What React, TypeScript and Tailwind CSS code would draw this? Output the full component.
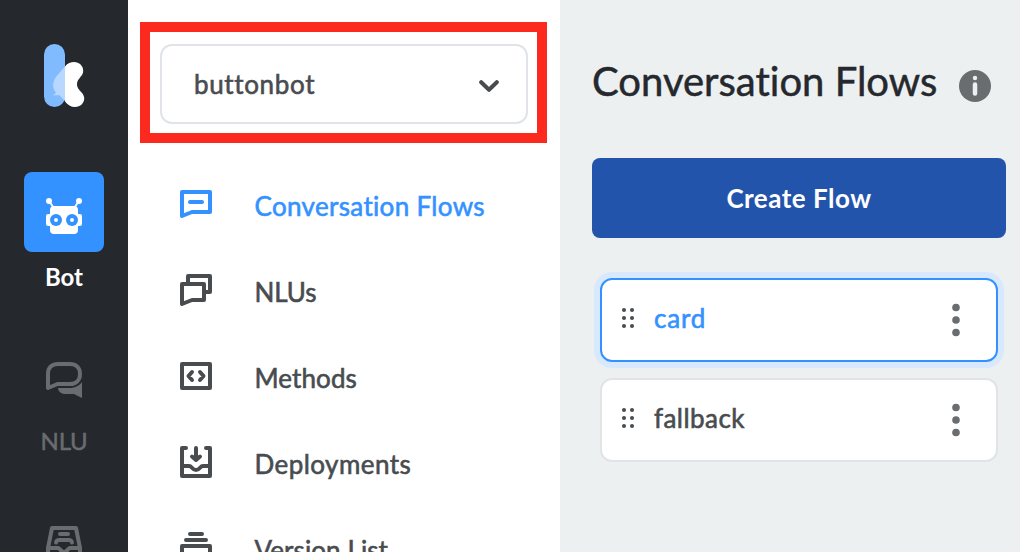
import type { ReactNode } from "react";

const stroke = {
  fill: "none",
  stroke: "currentColor",
  strokeWidth: 4,
  strokeLinecap: "round",
  strokeLinejoin: "round",
} as const;

function Logo() {
  return (
    <svg width="42" height="64" viewBox="0 0 42 64" className="relative left-px shrink-0">
      <rect x="0" y="0" width="21" height="63" rx="10.5" fill="#80bbff" />
      <path
        d="M21 22.5C23.500 19 27 18 30 18C37 18 41.500 25 38 31C36 34 33 36 33 40.500C33 43.500 35 46 38 49C43 54.500 39 63 31 63C27 63 23.500 61 21 57.500Z"
        fill="#fff"
      />
      <path d="M21 22.5L13.500 31C9 36 8 42 10.500 46.500L12 49L9 51.300H15.500L21 57Z" fill="#b8d8ff" />
    </svg>
  );
}

function BotIcon() {
  return (
    <svg width="36" height="36" viewBox="0 0 36 36" fill="#fff">
      <circle cx="3" cy="3" r="3" />
      <circle cx="33" cy="3" r="3" />
      <path d="M3 3L7.500 9.500M33 3L28.500 9.500" stroke="#fff" strokeWidth="2" />
      <rect x="4" y="8" width="28" height="28" rx="4" />
      <rect x="0" y="16" width="36" height="12" rx="2" />
      <circle cx="10" cy="22" r="6" fill="#3392ff" />
      <circle cx="26" cy="22" r="6" fill="#3392ff" />
      <circle cx="10" cy="22" r="2" />
      <circle cx="26" cy="22" r="2" />
    </svg>
  );
}

function NluIcon() {
  return (
    <svg width="36" height="36" viewBox="0 0 36 36">
      <path {...stroke} d="M2 26V12C2 5.500 6 2 12 2H24C30 2 34 6 34 12C34 18 30 22 24 22H11.500L2 26Z" />
      <path d="M12 26H24C29 26 33.500 23.500 36 20V36L28 32H20C15.500 32 12.500 30 12 26Z" fill="currentColor" />
    </svg>
  );
}

function ArchiveIcon() {
  return (
    <svg width="36" height="36" viewBox="0 0 36 36">
      <path {...stroke} d="M2 22L6 2H30L34 22V34H2Z" />
      <path {...stroke} d="M14 8H22M10 16.500C10.500 14.500 11.500 14 13 14H23C24.500 14 25.500 14.500 26 16.500" />
      <path {...stroke} d="M3 22H12C14 22 14.500 26 18 26C21.500 26 22 22 24 22H33" />
    </svg>
  );
}

function NavIcon({ children }: { children: ReactNode }) {
  return (
    <svg width="32" height="32" viewBox="0 0 32 32" className="relative -top-[3px] shrink-0" {...stroke}>
      {children}
    </svg>
  );
}

const navItems: { label: string; active?: boolean; tracking: string; icon: ReactNode }[] = [
  {
    label: "Conversation Flows",
    active: true,
    tracking: "tracking-[0.33px]",
    icon: <path d="M2 4H30V24H12L2 28ZM10 14H22" />,
  },
  {
    label: "NLUs",
    tracking: "tracking-[-0.1px]",
    icon: <path d="M2 10H24V26H12L2 30ZM8 9V2H30V18H26" />,
  },
  {
    label: "Methods",
    tracking: "tracking-[0.1px]",
    icon: <path d="M2 4H30V28H2ZM12 12L8.500 16L12 20M20 12L23.500 16L20 20" />,
  },
  {
    label: "Deployments",
    tracking: "tracking-[0.45px]",
    icon: <path d="M6 2H2V30H30V2H26M16 2V13M12 10.500L16 14L20 10.500M3 20H9C12 20 12 24 16 24C20 24 20 20 23 20H29" />,
  },
  {
    label: "Version List",
    tracking: "tracking-[0.1px]",
    icon: <path d="M10 2H22M6 8H26M2 14H30V30H2Z" />,
  },
];

function FlowRow({ name, active }: { name: string; active?: boolean }) {
  return (
    <div
      className={`flex h-[84px] items-center rounded-xl border-2 bg-white pl-5 ${
        active ? "border-[#3392ff] ring-6 ring-[#d8e9fd]" : "border-[#e0e4e7]"
      }`}
    >
      <svg width="12" height="20" viewBox="0 0 12 20" fill="#484c4f" className="relative -top-[2px] shrink-0">
        {[2, 10, 18].map((y) => (
          <g key={y}>
            <circle cx="2" cy={y} r="2" />
            <circle cx="10" cy={y} r="2" />
          </g>
        ))}
      </svg>
      <span
        className={`ml-5 flex-1 pb-1 text-[26px] [-webkit-text-stroke:0.6px_currentColor] ${
          active ? "tracking-[0.8px] text-[#3392ff]" : "tracking-[0.45px] text-[#484c4f]"
        }`}
      >
        {name}
      </span>
      <svg width="8" height="34" viewBox="0 0 8 34" fill="#6a6d70" className="mr-9 shrink-0">
        <circle cx="4" cy="4.500" r="3.800" />
        <circle cx="4" cy="17" r="3.800" />
        <circle cx="4" cy="29.500" r="3.800" />
      </svg>
    </div>
  );
}

export default function App() {
  return (
    <div className="flex h-[552px] w-[1020px] overflow-hidden bg-white font-['Lato','Open_Sans',sans-serif] [font-variant-ligatures:none]">
      <aside className="flex w-32 shrink-0 flex-col items-center bg-[#25282d] pt-11 text-[#6a6d70]">
        <Logo />
        <div className="mt-16 flex size-20 shrink-0 items-center justify-center rounded-lg bg-[#3392ff] pt-2">
          <BotIcon />
        </div>
        <span className="mt-[9px] mb-px h-8 text-2xl/8 font-bold text-white">Bot</span>
        <div className="mt-[68px] shrink-0">
          <NluIcon />
        </div>
        <span className="mt-[27px] mb-px h-8 text-2xl/8 tracking-[-0.3px] [-webkit-text-stroke:0.5px_currentColor]">NLU</span>
        <div className="mt-[68px] shrink-0">
          <ArchiveIcon />
        </div>
      </aside>

      <section className="flex w-[432px] shrink-0 flex-col bg-white pt-[22px]">
        <div className="ml-3 h-[121px] w-[407px] shrink-0 border-10 border-[#fc2a1e] pt-3 pr-[9px] pl-2.5">
          <button className="flex h-20 w-full items-center justify-between rounded-xl border-2 border-[#e0e4e8] pr-[27px] pl-8 text-[26px] text-[#484c4f]">
            <span className="tracking-[0.65px] [-webkit-text-stroke:0.6px_currentColor]">buttonbot</span>
            <svg width="20" height="14" viewBox="0 0 20 14" className="relative top-0.5" {...stroke}>
              <path d="M2.200 3.200L10 10.800L17.800 3.200" />
            </svg>
          </button>
        </div>
        <nav className="mt-[21px] flex flex-col">
          {navItems.map((item) => (
            <a
              key={item.label}
              className={`flex h-[86px] shrink-0 items-center gap-[42.5px] pl-[52px] text-[26px] ${
                item.active ? "text-[#3392ff]" : "text-[#484c4f]"
              }`}
            >
              <NavIcon>{item.icon}</NavIcon>
              <span className={`pb-0.5 [-webkit-text-stroke:0.6px_currentColor] ${item.tracking}`}>{item.label}</span>
            </a>
          ))}
        </nav>
      </section>

      <main className="flex flex-1 flex-col bg-[#ecf0f1] pt-14 pr-3.5 pl-8">
        <header className="flex h-[54px] items-center">
          <h1 className="w-[367px] pb-1 text-[40px] whitespace-nowrap text-[#25282d] [-webkit-text-stroke:0.5px_currentColor]">
            Conversation Flows
          </h1>
          <svg width="32" height="32" viewBox="0 0 32 32" className="relative top-[3px] shrink-0">
            <circle cx="16" cy="16" r="16" fill="#6a6d70" />
            <circle cx="16" cy="8" r="2.200" fill="#ecf0f1" />
            <path d="M16 14.500V23.500" stroke="#ecf0f1" strokeWidth="4.500" strokeLinecap="round" />
          </svg>
        </header>
        <button className="mt-12 h-20 shrink-0 rounded-lg bg-[#2354ab] text-[26px] font-bold tracking-[0.5px] text-white">
          Create Flow
        </button>
        <div className="mt-10 flex flex-col gap-4 px-2">
          <FlowRow name="card" active />
          <FlowRow name="fallback" />
        </div>
      </main>
    </div>
  );
}
